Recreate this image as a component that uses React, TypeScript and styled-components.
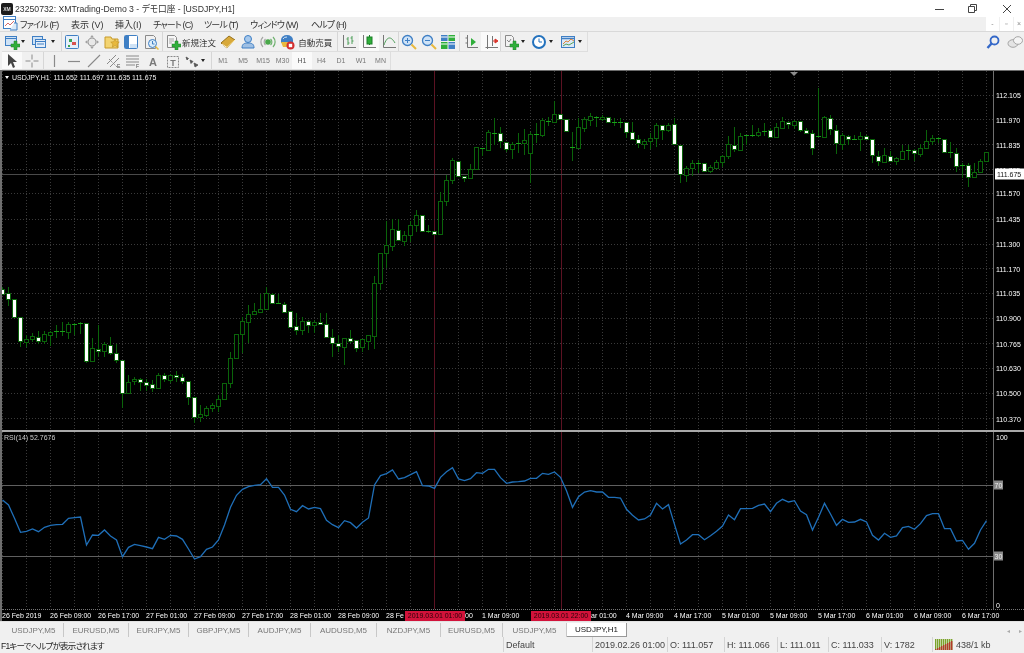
import React from 'react';
import styled, { createGlobalStyle } from 'styled-components';

const GlobalStyle = createGlobalStyle`
  html, body { margin: 0; padding: 0; background: #f0f0f0; }
  #root { width: 1024px; height: 653px; overflow: hidden; }
`;

const UI_FONT = `"Liberation Sans", "Noto Sans CJK JP", sans-serif`;
const CHART_FONT = `"Liberation Sans", sans-serif`;

/* ---------- market data, y values read as 3x crop coordinates ---------- */

type Row = [number, number, number, number, number];
interface Candle { x: number; top: number; bot: number; high: number; low: number; white: boolean }

const rowsA: Row[] = [
  [58,72,52,72,1],[70,88,52,108,1],[88,142,88,142,1],[142,214,142,232,1],[208,215,195,232,0],[197,208,190,215,0],
  [200,213,183,222,1],[193,214,183,222,0],[186,194,183,228,0],[184,187,165,203,0],[184,184,157,198,0],[163,185,157,208,0],
  [162,162,158,195,0],[160,160,155,192,0],[160,272,160,280,1],[235,272,205,275,0],[236,242,165,260,1],[222,242,215,260,0],
  [224,250,202,255,1],[250,269,222,280,1],[269,370,269,415,1],[337,370,315,370,0],[328,334,322,345,0],[328,336,325,362,1],
  [336,344,328,362,1],[343,354,330,365,1],[316,354,308,354,0],[316,328,310,335,1],[316,331,312,340,0],[316,320,302,335,1],
  [320,333,312,342,1],[332,380,332,405,1],[380,442,380,458,1],[433,441,405,455,0],[414,434,408,440,0],[406,415,398,425,0],
  [386,408,375,425,0],[340,388,338,388,0],[265,340,245,355,0],[192,264,192,268,0],[154,193,142,248,0],[133,155,105,218,0],
  [124,133,98,135,0],[118,125,72,130,0],[70,118,52,120,0],[72,100,68,100,1],[100,100,72,102,0],[102,125,95,128,1],
  [124,170,124,170,1],[169,181,128,195,1],[153,181,140,195,0],[153,164,150,190,1],[157,165,150,190,0],[157,161,130,165,1],
  [161,200,130,200,1],[201,218,178,262,1],[218,228,195,245,1],
];
const rowsB: Row[] = [
  [265,290,265,345,0],[264,272,240,280,1],[270,293,270,305,1],[268,292,268,305,0],[255,272,255,300,0],[100,258,78,298,0],
];
const rowsC: Row[] = [
  [490,580,490,600,0],[466,490,393,535,0],[418,467,388,482,0],[420,450,388,450,1],[436,452,422,468,0],[406,436,393,455,0],
  [374,406,360,425,0],[375,424,375,424,1],[424,424,405,428,0],[423,431,423,431,1],[334,433,305,435,0],[271,334,255,347,0],
  [211,271,205,283,0],[213,259,213,259,1],[259,264,259,276,1],[236,265,222,265,0],[172,236,172,236,0],[173,173,173,198,0],
  [127,179,120,179,0],[128,128,85,165,0],[128,154,112,173,1],[155,176,155,185,1],[161,176,155,207,0],[160,160,128,190,0],
  [149,160,118,195,0],[131,190,125,280,0],[131,131,100,158,0],[90,136,85,140,0],[94,94,80,108,0],[73,97,32,97,0],
  [73,87,73,87,1],[86,122,86,122,1],[172,172,127,212,0],[112,173,85,175,0],[86,113,80,125,0],[79,89,68,108,0],
  [80,80,78,110,0],[80,87,76,92,0],[82,96,82,96,1],[97,97,85,108,0],[97,97,85,115,0],[97,127,97,145,1],
  [127,146,97,146,1],[146,160,135,175,1],[153,161,148,177,0],[143,154,128,178,0],[104,145,98,170,0],[105,120,105,150,1],
  [104,121,100,125,0],[102,163,83,163,1],
];
const rowsD: Row[] = [
  [195,282,195,308,1],[264,284,257,305,0],[250,265,240,287,0],[250,250,240,278,0],[250,274,250,274,1],[260,274,255,278,0],
  [245,263,240,263,0],[228,247,225,262,0],[193,227,168,237,0],[194,208,140,215,1],[168,211,158,213,0],[166,166,165,195,0],
  [165,165,135,170,0],[156,165,145,170,0],[152,152,128,168,0],[151,170,145,170,1],[142,170,128,170,0],[124,143,112,145,0],
  [125,132,122,148,1],[124,134,120,148,0],[124,150,124,155,1],[151,159,145,162,1],[158,205,150,225,1],[167,167,25,170,0],
  [112,170,108,170,0],[115,148,105,165,1],[150,188,135,222,1],[165,191,160,210,0],[167,177,165,195,1],[176,176,165,180,0],
  [167,178,155,214,0],[168,178,165,178,1],[178,224,178,248,1],[227,244,212,258,1],[224,245,205,250,0],[227,242,212,242,1],
  [235,242,232,255,0],[214,237,195,237,0],[209,214,195,240,0],[211,220,208,242,1],[205,222,193,230,0],[182,205,150,205,0],
  [175,184,166,195,0],[175,175,172,190,0],[176,217,176,217,1],[217,217,187,235,0],[218,258,205,275,1],[256,256,250,295,0],
  [256,290,250,320,1],[277,290,250,292,0],[242,277,238,280,0],[216,243,215,245,0],
];

const toCandles = (base: number, rows: Row[]) =>
  rows.map(([t, b, h, l, w]) => ({
    top: Math.round(base + t / 3),
    bot: Math.round(base + b / 3),
    high: Math.round(base + h / 3),
    low: Math.round(base + l / 3),
    white: w === 1,
  }));

const candles: Candle[] = [
  ...toCandles(270, rowsA),
  ...toCandles(250, rowsB),
  ...toCandles(90, rowsC),
  ...toCandles(80, rowsD),
].map((c, i) => ({ ...c, x: 2 + i * 6 }));

const rsiRaw = [
  210,225,265,307,304,297,305,292,286,284,283,265,263,261,345,315,316,300,318,330,380,352,343,347,351,356,322,328,316,318,
  328,357,387,380,358,351,330,285,232,196,178,170,166,164,146,172,172,195,238,245,227,237,232,236,271,284,293,272,278,294,
  277,264,165,137,131,120,147,143,134,125,167,168,175,142,125,113,147,152,146,128,130,118,118,143,160,156,
  155,153,145,145,130,133,126,142,182,232,200,186,182,186,186,202,202,204,238,256,270,267,255,220,237,224,283,342,330,314,
  314,329,317,304,288,255,269,236,236,235,226,222,245,220,208,216,212,243,254,300,262,220,252,286,268,277,276,268,276,316,
  330,310,322,318,293,289,298,281,257,251,251,296,296,333,331,358,340,300,272,
];
const rsiPoints = rsiRaw.map((v, i) => `${2.5 + i * 6},${430 + v / 3}`).join(' ');

const PRICE_LINES = [95, 119, 144, 169, 193, 219, 244, 268, 293, 318, 343, 368, 393, 418];
const PRICE_LABELS: [string, number][] = [
  ['112.105', 95], ['111.970', 120], ['111.835', 145], ['111.705', 170], ['111.570', 193], ['111.435', 219],
  ['111.300', 244], ['111.170', 269], ['111.035', 293], ['110.900', 318], ['110.765', 344], ['110.630', 368],
  ['110.500', 393], ['110.370', 419],
];
// what stays readable beside the two red markers is cut down to the visible letters
const TIME_LABELS: [string, number][] = [
  ['26 Feb 2019', 0], ['26 Feb 09:00', 0], ['26 Feb 17:00', 0], ['27 Feb 01:00', 0], ['27 Feb 09:00', 0], ['27 Feb 17:00', 0],
  ['28 Feb 01:00', 0], ['28 Feb 09:00', 0], ['28 Fe', 0], ['00', 31], ['1 Mar 09:00', 0], ['', 0], ['ar 01:00', 13],
  ['4 Mar 09:00', 0], ['4 Mar 17:00', 0], ['5 Mar 01:00', 0], ['5 Mar 09:00', 0], ['5 Mar 17:00', 0], ['6 Mar 01:00', 0],
  ['6 Mar 09:00', 0], ['6 Mar 17:00', 0],
];
const TABS: [string, number][] = [
  ['USDJPY,M5', 64], ['EURUSD,M5', 65], ['EURJPY,M5', 60], ['GBPJPY,M5', 60], ['AUDJPY,M5', 62],
  ['AUDUSD,M5', 66], ['NZDJPY,M5', 64], ['EURUSD,M5', 62], ['USDJPY,M5', 64],
];
const VERTICALS = Array.from({ length: 42 }, (_, i) => 2.5 + i * 24);

/* ---------- icons ---------- */

const B = '#3f7fc4';
const G = '#2fae3a';
const Y = '#e8b93e';
const Gy = '#8a8a8a';
const Dk = '#4a4a4a';

const Plus = () => <path d="M10 7h3v3h3v3h-3v3h-3v-3H7v-3h3z" fill={G} stroke="#1d7f28" strokeWidth=".5" />;

const ICONS: Record<string, React.ReactNode> = {
  doc: (<><rect x="1.5" y="1.5" width="12" height="12" fill="#fff" stroke={B} /><path d="M1.5 4.5h12" stroke={B} /><path d="M3 11l3-3 2 2 4-4" fill="none" stroke="#d46a6a" /><path d="M12 8h3v7H8" fill="#dbe9f7" stroke={B} /></>),
  newChart: (<><rect x="1.5" y="2.5" width="11" height="9" fill="#cfe2f5" stroke={B} /><path d="M1.5 4.5h11" stroke={B} /><Plus /></>),
  profiles: (<><rect x="1.5" y="2.5" width="10" height="8" fill="#cfe2f5" stroke={B} /><rect x="4.5" y="5.5" width="10" height="8" fill="#e4eef9" stroke={B} /><path d="M4.5 7.5h10M6 10h7" stroke={B} /></>),
  watch: (<><rect x="1.5" y="1.5" width="13" height="13" rx="1" fill="#e6f0fa" stroke={B} /><path d="M5 5h3v3H5z" fill="#3aa655" /><path d="M8 8h4v3H8z" fill="#d9534f" /><path d="M4 11h2v2H4z" fill="#3aa655" /></>),
  nav: (<><circle cx="8" cy="8" r="4" fill="#e8e8e8" stroke="#a0a0a0" /><path d="M8 1l2 2.500H6zM8 15l2-2.500H6zM1 8l2.500-2v4zM15 8l-2.500-2v4z" fill="#a0a0a0" /></>),
  folder: (<><path d="M1 3h6l1 2h6v9H1z" fill="#f3d472" stroke="#c79a2a" /><path d="M11 5l1.300 2.700 3 .4-2.200 2 .6 3-2.700-1.500-2.700 1.500.6-3-2.200-2 3-.4z" fill={Y} stroke="#b98a1e" strokeWidth=".5" /></>),
  panel: (<><rect x="1.500" y="1.500" width="13" height="13" rx="1" fill="#fff" stroke={B} /><path d="M2 2h4v12H2z" fill="#3f7fc4" /><path d="M7 10h7v4H7z" fill="#cfe2f5" /></>),
  tester: (<><path d="M2.500 1.500h8l2 2v11h-10z" fill="#f1f1f1" stroke={Gy} /><circle cx="9.500" cy="9.500" r="4" fill="#dcecf9" stroke={B} /><path d="M9.500 7v3h2" fill="none" stroke={B} /><path d="M12.500 12.500l3 3" stroke={Y} strokeWidth="1.500" /></>),
  order: (<><path d="M2.500 1.500h7l2 2v10h-9z" fill="#f7f7f7" stroke={Gy} /><path d="M4 5h5M4 7h5M4 9h3" stroke="#aaa" /><Plus /></>),
  book: (<><path d="M1 9l8-7 6 4-8 8z" fill="#d8a93a" stroke="#96701a" /><path d="M2 10l5 3.500 8-7.500" fill="none" stroke="#fff2c4" /></>),
  person: (<><circle cx="8" cy="5" r="3.500" fill="#a6c8ec" stroke={B} /><path d="M2 14c0-4 2-5 6-5s6 1 6 5z" fill="#9fc0e4" stroke={B} /></>),
  signal: (<><path d="M3 13a7 7 0 010-10M5.500 11a4 4 0 010-6" fill="none" stroke="#a5a5a5" strokeWidth="1.200" /><path d="M13 3a7 7 0 010 10M10.500 5a4 4 0 010 6" fill="none" stroke="#6fb16f" strokeWidth="1.200" /><circle cx="8" cy="8" r="2.800" fill="#4aa84a" /></>),
  auto: (<><path d="M2 6a6 5 0 0112 0v3H2z" fill={B} /><path d="M4 5a4 3 0 014-2" fill="none" stroke="#cfe2f5" /><path d="M2 8h10v5H4z" fill={Y} /><circle cx="11.500" cy="11.500" r="4" fill="#d32f2f" /><rect x="9.800" y="9.800" width="3.400" height="3.400" fill="#fff" /></>),
  bars: (<><path d="M2.500 1v12.500H15" fill="none" stroke="#777" /><path d="M7 3v8M5.500 5H7M7 9h1.500M11 2v8M9.500 4H11M11 7h1.500" fill="none" stroke="#4f9f5a" /></>),
  candle: (<><path d="M2.500 1v12.500H15" fill="none" stroke="#777" /><path d="M8.500 1v10" stroke="#1d7f28" /><rect x="6" y="3" width="5" height="7" fill={G} stroke="#1d7f28" /></>),
  line: (<><path d="M2.500 1v12.500H15" fill="none" stroke="#777" /><path d="M3 11c3-9 7-9 11-2" fill="none" stroke="#4f9f5a" /></>),
  zoomIn: (<><circle cx="6.500" cy="6.500" r="5" fill="#cfe3f7" stroke={B} strokeWidth="1.300" /><path d="M4 6.500h5M6.500 4v5" stroke={B} /><path d="M10.500 10.500l4.500 4.500" stroke={Y} strokeWidth="2" /></>),
  zoomOut: (<><circle cx="6.500" cy="6.500" r="5" fill="#cfe3f7" stroke={B} strokeWidth="1.300" /><path d="M4 6.500h5" stroke={B} /><path d="M10.500 10.500l4.500 4.500" stroke={Y} strokeWidth="2" /></>),
  tile: (<><rect x="1" y="1" width="6.500" height="6" fill="#3f7fc4" /><rect x="8.500" y="1" width="6.500" height="6" fill={G} /><rect x="1" y="8" width="6.500" height="7" fill={G} /><rect x="8.500" y="8" width="6.500" height="7" fill="#3f7fc4" /><path d="M1 3h6.500M8.500 3H15M1 10h6.500M8.500 10H15" stroke="#fff" /></>),
  autoScroll: (<><path d="M4.500 1v12.500H15" fill="none" stroke="#777" /><path d="M2.500 4H4.500M2.500 9H4.500" stroke="#777" /><path d="M8 4l5 4-5 4z" fill={G} /></>),
  shift: (<><path d="M4.500 1v14M2.500 13.500H15" fill="none" stroke="#777" /><path d="M9.500 2v10" stroke="#777" /><path d="M10 7h3M12 5l3 2-3 2z" fill="#d9342b" stroke="#d9342b" /></>),
  indicator: (<><path d="M2.500 1.500h6l2 2v9h-8z" fill="#f2f2f2" stroke={Gy} /><path d="M4 6l2 2 2-3" fill="none" stroke="#888" /><Plus /></>),
  clock: (<><circle cx="8" cy="8" r="6" fill="#fff" stroke="#2472bd" strokeWidth="2" /><path d="M8 4.500V8h3" fill="none" stroke="#2472bd" /></>),
  template: (<><rect x="1.500" y="2.500" width="13" height="11" fill="#dbe9f7" stroke={B} /><path d="M1.500 4.500h13" stroke={B} strokeWidth="1.500" /><path d="M3 10l3-3 2 1 3-3 3 2" fill="none" stroke="#e0863c" /><path d="M3 12l3-2 3 1 5-3" fill="none" stroke="#5aa45a" /></>),
  cursor: (<path d="M4 1v12l3-3 2 5 2-1-2-5h4z" fill="#444" />),
  cross: (<path d="M8 1.500v5M8 9.500v5M1.500 8h5M9.500 8h5" stroke={Gy} />),
  vLine: (<path d="M8.500 2v12" stroke={Gy} strokeWidth="1.200" />),
  hLine: (<path d="M2 8.500h12" stroke={Gy} strokeWidth="1.200" />),
  trend: (<path d="M2 14L14 2" stroke={Gy} strokeWidth="1.100" />),
  channel: (<><path d="M1 11L10 2M4 14l9-9" stroke={Gy} /><path d="M3 6l8 8" stroke={Gy} strokeDasharray="1.500 1" /><text x="11" y="15" fontSize="5" fill={Dk} fontFamily={CHART_FONT}>E</text></>),
  fibo: (<><path d="M1 3h13M1 6h13M1 9h13M1 12h9" stroke={Gy} /><text x="11" y="15" fontSize="5" fill={Dk} fontFamily={CHART_FONT}>F</text></>),
  text: (<text x="8" y="13" textAnchor="middle" fontSize="11" fontWeight="700" fill="#7a7a7a" fontFamily={CHART_FONT}>A</text>),
  label: (<><path d="M2.500 3.500h11v11h-11z" fill="none" stroke={Gy} strokeDasharray="2 1" /><text x="8" y="12.500" textAnchor="middle" fontSize="9" fontWeight="700" fill="#7a7a7a" fontFamily={CHART_FONT}>T</text></>),
  arrows: (<path d="M2 4l2.500 1.500L3 7zM6 7l3 1.500-2 2zM10 10l4 2-3 2z" fill="#555" stroke="#555" strokeWidth=".8" />),
  search: (<><circle cx="9.500" cy="6.500" r="4" fill="none" stroke="#3468c8" strokeWidth="1.800" /><path d="M6.500 9.500L2.500 14" stroke="#3468c8" strokeWidth="2.400" /></>),
  chat: (<><ellipse cx="6" cy="9.500" rx="5" ry="3.800" fill="#e4e4e4" stroke="#a5a5a5" /><ellipse cx="11" cy="6.500" rx="4.500" ry="3.800" fill="#f4f4f4" stroke="#a5a5a5" /></>),
};

const Icon = ({ name }: { name: string }) => (
  <IconSvg viewBox="0 0 16 16" aria-hidden="true">{ICONS[name]}</IconSvg>
);

/* ---------- chrome ---------- */

// the reference is a downscaled capture, everything in it is slightly soft
const Page = styled.div`
  width: 1024px;
  height: 653px;
  display: flex;
  flex-direction: column;
  background: #f0f0f0;
  font-family: ${UI_FONT};
  overflow: hidden;
  filter: blur(0.3px);
`;

const TitleBar = styled.div`
  height: 17px;
  display: flex;
  align-items: center;
  background: #fff;
  padding-left: 1px;
`;

const AppLogo = styled.span`
  width: 12px;
  height: 12px;
  margin-right: 2px;
  border-radius: 2px;
  background: #1c1c1c;
  color: #ddd;
  font: 700 5px/12px ${CHART_FONT};
  text-align: center;
`;

const TitleText = styled.span`
  font-size: 8.7px;
  color: #333;
  white-space: nowrap;
  font-feature-settings: 'palt';
`;

const WindowButtons = styled.div`
  margin-left: auto;
  display: flex;
`;

const WindowButton = styled.svg`
  width: 34px;
  height: 16px;
  stroke: #444;
  fill: none;
`;

const MenuBar = styled.div`
  height: 14px;
  display: flex;
  align-items: center;
  padding-left: 2px;
  border-bottom: 1px solid #d9d9d9;
  background: #f0f0f0;
`;

const MenuItem = styled.span<{ $w: number; $tight?: boolean }>`
  width: ${({ $w }) => $w}px;
  flex: none;
  font-size: 9px;
  color: #333;
  white-space: nowrap;
  font-feature-settings: 'palt';
  letter-spacing: ${({ $tight }) => ($tight ? '-0.85px' : '0')};
`;

const ChildButtons = styled.div`
  margin-left: auto;
  display: flex;
  gap: 1px;
`;

const ChildButton = styled.span`
  width: 13px;
  height: 14px;
  background: #fff;
  color: #888;
  font: 7px/13px ${CHART_FONT};
  text-align: center;
  &:last-child {
    width: 10px;
  }
`;

const Toolbar = styled.div<{ $h: number }>`
  height: ${({ $h }) => $h}px;
  flex: none;
  display: flex;
  align-items: center;
  padding-left: 2px;
  background: #f0f0f0;
`;

const Strip = styled.div`
  height: 100%;
  display: flex;
  align-items: center;
  box-sizing: border-box;
  border-bottom: 1px solid #dedede;
  border-right: 1px solid #dedede;
`;

const IconSvg = styled.svg`
  width: 16px;
  height: 16px;
  flex: none;
`;

const ToolButton = styled.div<{ $w?: number; $active?: boolean }>`
  width: ${({ $w }) => $w ?? 20}px;
  height: 100%;
  flex: none;
  display: flex;
  align-items: center;
  justify-content: center;
  background: ${({ $active }) => ($active ? '#fafafa' : 'transparent')};
`;

const TextButton = styled.div<{ $w: number; $pad: number }>`
  width: ${({ $w }) => $w}px;
  height: 100%;
  flex: none;
  display: flex;
  align-items: center;
  gap: 1px;
  padding-left: ${({ $pad }) => $pad}px;
  box-sizing: border-box;
  font-size: 8.5px;
  color: #333;
  white-space: nowrap;
`;

const DropButton = styled.div<{ $w: number; $gap: number }>`
  width: ${({ $w }) => $w}px;
  height: 100%;
  flex: none;
  display: flex;
  align-items: center;
  gap: ${({ $gap }) => $gap}px;
  padding-left: 2px;
  box-sizing: border-box;
`;

const DropArrow = styled.i`
  flex: none;
  width: 0;
  height: 0;
  border-left: 2.5px solid transparent;
  border-right: 2.5px solid transparent;
  border-top: 3px solid #222;
`;

const Sep = styled.span<{ $w?: number }>`
  flex: none;
  width: ${({ $w }) => $w ?? 2}px;
  height: 100%;
  display: flex;
  justify-content: center;
  &::after {
    content: '';
    width: 1px;
    height: 100%;
    background: #d6d6d6;
  }
`;

const PeriodButton = styled.div<{ $w?: number; $active?: boolean }>`
  width: ${({ $w }) => $w ?? 20}px;
  height: 100%;
  flex: none;
  display: flex;
  align-items: center;
  justify-content: center;
  font: 7px ${CHART_FONT};
  color: ${({ $active }) => ($active ? '#555' : '#777')};
  background: ${({ $active }) => ($active ? '#fafafa' : 'transparent')};
`;

const RightTools = styled.div`
  margin-left: auto;
  display: flex;
  align-items: center;
  gap: 6px;
  padding-right: 1px;
`;

/* ---------- chart ---------- */

const ChartArea = styled.div`
  height: 551px;
  flex: none;
  display: flex;
  flex-direction: column;
  position: relative;
  box-sizing: border-box;
  background: #000;
  border-top: 1px solid #6a6a6a;
  border-left: 2px solid #6f6f6f;
  color: #fff;
  font: 7px ${CHART_FONT};
`;

const Pane = styled.div<{ $h: number }>`
  height: ${({ $h }) => $h}px;
  flex: none;
  display: flex;
  position: relative;
`;

const Plot = styled.svg`
  width: 991px;
  height: 100%;
  flex: none;
  display: block;
  shape-rendering: crispEdges;
`;

const PriceAxis = styled.div`
  flex: 1;
  position: relative;
  border-left: 1px solid #6f6f6f;
`;

const Divider = styled.div`
  height: 2px;
  flex: none;
  background: #a8a8a8;
`;

const PriceLabel = styled.span<{ $y: number }>`
  position: absolute;
  left: 2px;
  top: ${({ $y }) => $y}px;
  transform: translateY(-50%);
  line-height: 9px;
  white-space: nowrap;
`;

const LastPrice = styled.span<{ $y: number }>`
  position: absolute;
  left: 1px;
  right: 0;
  top: ${({ $y }) => $y}px;
  transform: translateY(-50%);
  padding-left: 2px;
  background: #fff;
  color: #111;
  line-height: 11px;
`;

const LevelBox = styled.span<{ $y: number }>`
  position: absolute;
  left: 0;
  top: ${({ $y }) => $y}px;
  transform: translateY(-50%);
  width: 9px;
  background: #8a8a8a;
  color: #eee;
  line-height: 9px;
  text-align: center;
`;

const Legend = styled.div`
  position: absolute;
  left: 10px;
  top: 2px;
  line-height: 9px;
  white-space: pre;
  color: #f2f2f2;
  &::before {
    content: '';
    position: absolute;
    left: -7px;
    top: 3px;
    border-left: 2.5px solid transparent;
    border-right: 2.5px solid transparent;
    border-top: 3px solid #fff;
  }
`;

const RsiLegend = styled.div`
  position: absolute;
  left: 2px;
  top: 1px;
  line-height: 9px;
  color: #ccc;
`;

const ShiftMark = styled.i`
  position: absolute;
  left: 788px;
  top: 1px;
  border-left: 4px solid transparent;
  border-right: 4px solid transparent;
  border-top: 4px solid #8c8c8c;
`;

const TimeAxis = styled.div`
  flex: 1;
  display: flex;
  align-items: center;
  position: relative;
  border-top: 1px dotted #777;
  overflow: hidden;
`;

const TimeLabel = styled.span<{ $pad: number }>`
  width: 48px;
  flex: none;
  box-sizing: border-box;
  padding-left: ${({ $pad }) => $pad}px;
  white-space: nowrap;
`;

const TimeMarker = styled.span<{ $x: number }>`
  position: absolute;
  left: ${({ $x }) => $x}px;
  top: 1px;
  width: 60px;
  height: 10px;
  background: #d2123a;
  color: #2a0208;
  line-height: 10px;
  text-align: center;
`;

const TabStrip = styled.div`
  height: 16px;
  flex: none;
  display: flex;
  box-sizing: border-box;
  padding-top: 1px;
  border-top: 1px solid #e2e2e2;
  background: #f0f0f0;
`;

const Tab = styled.div<{ $w: number; $active?: boolean }>`
  width: ${({ $w }) => $w}px;
  flex: none;
  box-sizing: border-box;
  display: flex;
  align-items: center;
  justify-content: center;
  font-size: 8px;
  color: ${({ $active }) => ($active ? '#111' : '#777')};
  background: ${({ $active }) => ($active ? '#fff' : 'transparent')};
  border-right: 1px solid ${({ $active }) => ($active ? '#999' : '#c8c8c8')};
  border-bottom: ${({ $active }) => ($active ? '1px solid #999' : '0')};
  &:first-child {
    padding-left: 4px;
  }
`;

const TabScroll = styled.div`
  margin-left: auto;
  display: flex;
  align-items: center;
  gap: 9px;
  padding-right: 2px;
  color: #aaa;
  font: 6px ${CHART_FONT};
`;

const StatusBar = styled.div`
  height: 15px;
  flex: none;
  display: flex;
  align-items: center;
  font-size: 9px;
  color: #444;
`;

const StatusCell = styled.div<{ $w: number }>`
  width: ${({ $w }) => $w}px;
  height: 100%;
  flex: none;
  display: flex;
  align-items: center;
  gap: 2px;
  box-sizing: border-box;
  padding-left: 2px;
  border-left: 1px solid #d4d4d4;
  white-space: nowrap;
`;

const HelpCell = styled(StatusCell)`
  border-left: 0;
  color: #222;
  padding-left: 1px;
  font-size: 8.5px;
  letter-spacing: -0.8px;
  font-feature-settings: 'palt';
`;

const ConnBars = styled.svg`
  width: 19px;
  height: 11px;
  flex: none;
`;

const CandleMark = ({ c }: { c: Candle }) => {
  const cx = c.x + 0.5;
  const flat = c.bot - c.top < 2;
  return (
    <g>
      <path d={`M${cx} ${c.high}V${c.low}`} stroke="#0a640a" />
      {flat && !c.white ? (
        <path d={`M${c.x - 2} ${c.top + 0.5}h5`} stroke="#18a018" />
      ) : (
        <rect
          x={c.x - 1.5}
          y={c.top + 0.5}
          width={4}
          height={Math.max(c.bot - c.top, 1)}
          fill={c.white ? '#fff' : '#000'}
          stroke="#0a640a"
        />
      )}
    </g>
  );
};

const GridLines = ({ y1, y2 }: { y1: number; y2: number }) => (
  <>
    {VERTICALS.map((x) => (
      <path key={x} d={`M${x} ${y1}V${y2}`} stroke="#3a3a3a" strokeDasharray="1 2" />
    ))}
    {[434.5, 561.5].map((x) => (
      <path key={x} d={`M${x} ${y1}V${y2}`} stroke="#5c1222" />
    ))}
  </>
);

const App = () => (
  <Page>
    <GlobalStyle />
    <TitleBar>
      <AppLogo>XM</AppLogo>
      <TitleText>23250732: XMTrading-Demo 3 - デモ口座 - [USDJPY,H1]</TitleText>
      <WindowButtons>
        <WindowButton viewBox="0 0 34 16"><path d="M13 8.500h9" /></WindowButton>
        <WindowButton viewBox="0 0 34 16"><path d="M12.500 5.500h6v6h-6zM14.500 5.500v-2h6v6h-2" /></WindowButton>
        <WindowButton viewBox="0 0 34 16"><path d="M13 4l8 8M21 4l-8 8" /></WindowButton>
      </WindowButtons>
    </TitleBar>

    <MenuBar>
      <MenuItem $w={18}><Icon name="doc" /></MenuItem>
      <MenuItem $w={51} $tight>ファイル (F)</MenuItem>
      <MenuItem $w={44}>表示 (V)</MenuItem>
      <MenuItem $w={38}>挿入(I)</MenuItem>
      <MenuItem $w={51} $tight>チャート (C)</MenuItem>
      <MenuItem $w={46} $tight>ツール (T)</MenuItem>
      <MenuItem $w={61} $tight>ウィンドウ (W)</MenuItem>
      <MenuItem $w={40} $tight>ヘルプ (H)</MenuItem>
      <ChildButtons>
        <ChildButton>-</ChildButton>
        <ChildButton>▫</ChildButton>
        <ChildButton>×</ChildButton>
      </ChildButtons>
    </MenuBar>

    <Toolbar $h={20}>
      <Strip>
        <DropButton $w={27} $gap={1}><Icon name="newChart" /><DropArrow /></DropButton>
        <DropButton $w={31} $gap={4}><Icon name="profiles" /><DropArrow /></DropButton>
        <Sep />
        <ToolButton><Icon name="watch" /></ToolButton>
        <ToolButton><Icon name="nav" /></ToolButton>
        <ToolButton $w={19}><Icon name="folder" /></ToolButton>
        <ToolButton><Icon name="panel" /></ToolButton>
        <ToolButton><Icon name="tester" /></ToolButton>
        <Sep />
        <TextButton $w={55} $pad={2}><Icon name="order" />新規注文</TextButton>
        <ToolButton><Icon name="book" /></ToolButton>
        <ToolButton><Icon name="person" /></ToolButton>
        <ToolButton><Icon name="signal" /></ToolButton>
        <TextButton $w={58} $pad={1}><Icon name="auto" />&nbsp;自動売買</TextButton>
        <Sep $w={3} />
        <ToolButton><Icon name="bars" /></ToolButton>
        <ToolButton $active><Icon name="candle" /></ToolButton>
        <ToolButton $w={19}><Icon name="line" /></ToolButton>
        <Sep $w={1} />
        <ToolButton><Icon name="zoomIn" /></ToolButton>
        <ToolButton $w={19}><Icon name="zoomOut" /></ToolButton>
        <ToolButton><Icon name="tile" /></ToolButton>
        <Sep $w={3} />
        <ToolButton><Icon name="autoScroll" /></ToolButton>
        <ToolButton $w={19} $active><Icon name="shift" /></ToolButton>
        <Sep $w={1} />
        <DropButton $w={28} $gap={2}><Icon name="indicator" /><DropArrow /></DropButton>
        <DropButton $w={29} $gap={2}><Icon name="clock" /><DropArrow /></DropButton>
        <DropButton $w={29} $gap={2}><Icon name="template" /><DropArrow /></DropButton>
      </Strip>
      <RightTools>
        <Icon name="search" />
        <Icon name="chat" />
      </RightTools>
    </Toolbar>

    <Toolbar $h={18}>
      <Strip>
        <ToolButton $active><Icon name="cursor" /></ToolButton>
        <ToolButton><Icon name="cross" /></ToolButton>
        <Sep />
        <ToolButton><Icon name="vLine" /></ToolButton>
        <ToolButton><Icon name="hLine" /></ToolButton>
        <ToolButton><Icon name="trend" /></ToolButton>
        <ToolButton $w={19}><Icon name="channel" /></ToolButton>
        <ToolButton><Icon name="fibo" /></ToolButton>
        <ToolButton><Icon name="text" /></ToolButton>
        <ToolButton $w={19}><Icon name="label" /></ToolButton>
        <DropButton $w={28} $gap={1}><Icon name="arrows" /><DropArrow /></DropButton>
        <Sep $w={3} />
        <PeriodButton>M1</PeriodButton>
        <PeriodButton>M5</PeriodButton>
        <PeriodButton>M15</PeriodButton>
        <PeriodButton $w={19}>M30</PeriodButton>
        <PeriodButton $active>H1</PeriodButton>
        <PeriodButton $w={19}>H4</PeriodButton>
        <PeriodButton>D1</PeriodButton>
        <PeriodButton>W1</PeriodButton>
        <PeriodButton $w={19}>MN</PeriodButton>
      </Strip>
    </Toolbar>

    <ChartArea>
      <Pane $h={359}>
        <Plot viewBox="2 71 991 359" preserveAspectRatio="none">
          <GridLines y1={71} y2={430} />
          {PRICE_LINES.map((y) => (
            <path key={y} d={`M2 ${y + 0.5}H993`} stroke="#3a3a3a" strokeDasharray="1 2" />
          ))}
          <path d="M2 174.500H993" stroke="#4a4a4a" />
          {candles.map((c) => (
            <CandleMark key={c.x} c={c} />
          ))}
        </Plot>
        <PriceAxis>
          {PRICE_LABELS.map(([text, y]) => (
            <PriceLabel key={text} $y={y - 71}>{text}</PriceLabel>
          ))}
          <LastPrice $y={103}>111.675</LastPrice>
        </PriceAxis>
        <Legend>{'USDJPY,H1  111.652 111.697 111.635 111.675'}</Legend>
        <ShiftMark />
      </Pane>
      <Divider />
      <Pane $h={177}>
        <Plot viewBox="2 432 991 177" preserveAspectRatio="none">
          <GridLines y1={432} y2={609} />
          <path d="M2 485.500H993M2 556.500H993" stroke="#5f5f5f" />
          <polyline
            points={rsiPoints}
            fill="none"
            stroke="#1f6fb8"
            strokeWidth="1.3"
            shapeRendering="geometricPrecision"
          />
        </Plot>
        <PriceAxis>
          <PriceLabel $y={5}>100</PriceLabel>
          <LevelBox $y={53}>70</LevelBox>
          <LevelBox $y={124}>30</LevelBox>
          <PriceLabel $y={173}>0</PriceLabel>
        </PriceAxis>
        <RsiLegend>RSI(14) 52.7676</RsiLegend>
      </Pane>
      <TimeAxis>
        {TIME_LABELS.map(([t, pad], i) => (
          <TimeLabel key={i} $pad={pad}>{t}</TimeLabel>
        ))}
        <TimeMarker $x={403}>2019.03.01 01:00</TimeMarker>
        <TimeMarker $x={529}>2019.03.01 22:00</TimeMarker>
      </TimeAxis>
    </ChartArea>

    <TabStrip>
      {TABS.map(([name, w], i) => (
        <Tab key={i} $w={w}>{name}</Tab>
      ))}
      <Tab $w={60} $active>USDJPY,H1</Tab>
      <TabScroll><span>◂</span><span>▸</span></TabScroll>
    </TabStrip>

    <StatusBar>
      <HelpCell $w={503}>F1キーでヘルプが表示されます</HelpCell>
      <StatusCell $w={89}>Default</StatusCell>
      <StatusCell $w={75}>2019.02.26 01:00</StatusCell>
      <StatusCell $w={57}>O: 111.057</StatusCell>
      <StatusCell $w={53}>H: 111.066</StatusCell>
      <StatusCell $w={51}>L: 111.011</StatusCell>
      <StatusCell $w={53}>C: 111.033</StatusCell>
      <StatusCell $w={51}>V: 1782</StatusCell>
      <StatusCell $w={92}>
        <ConnBars viewBox="0 0 19 11" aria-hidden="true">
          {Array.from({ length: 9 }, (_, i) => (
            <g key={i}>
              <rect x={i * 2} y={0} width={1.4} height={11} fill="#7aa32a" />
              <rect x={i * 2} y={10 - i} width={1.4} height={i + 1} fill="#b23a2a" />
            </g>
          ))}
        </ConnBars>
        438/1 kb
      </StatusCell>
    </StatusBar>
  </Page>
);

export default App;
